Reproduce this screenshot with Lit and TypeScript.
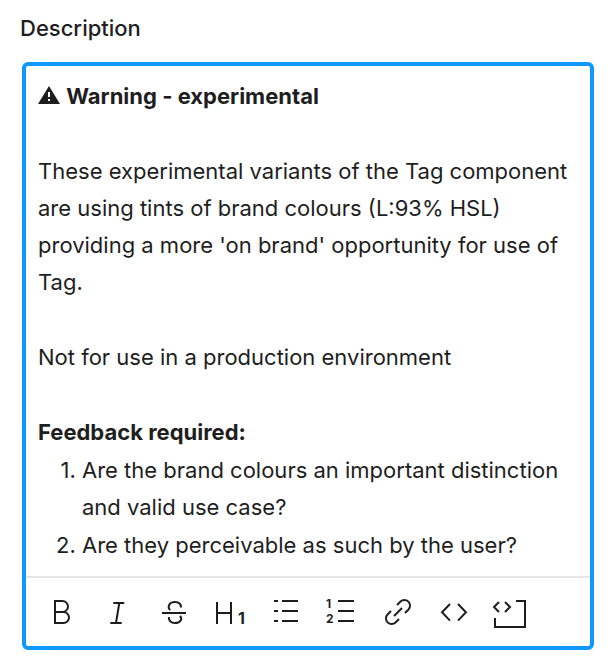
import { LitElement, html, css, svg, type SVGTemplateResult } from "lit";
import { customElement } from "lit/decorators.js";

interface Tool {
  label: string;
  icon: SVGTemplateResult;
}

const tools: Tool[] = [
  {
    label: "Bold",
    icon: svg`<path d="M11 18V7h7.5a5.5 5.5 0 0 1 0 11M18 18H11v11h8.5a5.5 5.5 0 0 0 0-11H11" />`,
  },
  {
    label: "Italic",
    icon: svg`<path d="M13.3 9h11M10.3 29h11.4M19.3 9l-3.3 20" />`,
  },
  {
    label: "Strikethrough",
    icon: svg`<path d="M6 19h24M14.3 16C11.3 13.5 12.5 8 19 8c4 0 6 2.5 6 5.500M12.8 23c0 4 2.4 6 6.2 6 6 0 7.5-4.5 5-7" />`,
  },
  {
    label: "Heading 1",
    icon: svg`<path d="M5 8v22M19 8v22M5 19h14" /><text class="digit heading" x="26" y="30">1</text>`,
  },
  {
    label: "Bulleted list",
    icon: svg`<path d="M6 7h4M14 7h16M6 17h4M14 17h16M6 27h4M14 27h16" />`,
  },
  {
    label: "Numbered list",
    icon: svg`<path d="M14 7h16M14 17h16M14 27h16" /><text class="digit" x="2" y="14">1</text><text class="digit" x="2" y="29">2</text>`,
  },
  {
    label: "Link",
    icon: svg`<path d="M17 11l3.5-3.5a5.66 5.66 0 0 1 8 8L25 19M19 25l-3.5 3.5a5.66 5.66 0 0 1-8-8L11 17M14 22l8-8" />`,
  },
  {
    label: "Code",
    icon: svg`<path d="M14 10l-8 8.3 8 8.3M22 10l8 8.3-8 8.3" />`,
  },
  {
    label: "Code block",
    icon: svg`<path d="M24 7h9v26H3v-9M7 8l-5 5 5 5M13 8l5 5-5 5" />`,
  },
];

@customElement("app-root")
export class AppRoot extends LitElement {
  static styles = css`
    :host {
      display: block;
      min-height: 100vh;
      box-sizing: border-box;
      padding: 10px 20px 14px;
      background: #fff;
      color: #1e1e1e;
      font: 400 22px/37px Inter, "Liberation Sans", sans-serif;
    }
    .label {
      display: block;
      margin-bottom: 15px;
      font-weight: 500;
    }
    .field {
      margin: 0 0 0 2px;
      border: 4px solid #0d99ff;
      border-radius: 6px;
    }
    .editor {
      padding: 12px;
      outline: none;
    }
    .text,
    .title {
      margin: 0;
    }
    .text {
      margin-bottom: 38px;
    }
    .title {
      font-weight: 700;
    }
    .warning {
      width: 22px;
      height: 18px;
      margin-right: 1px;
      fill: currentColor;
    }
    .mark {
      stroke: #fff;
      stroke-width: 2;
    }
    .list {
      margin: 0;
      padding-left: 44px;
    }
    .item {
      margin-top: 1px;
    }
    .item::marker {
      font-variant-numeric: normal;
    }
    .toolbar {
      display: flex;
      flex-wrap: wrap;
      padding: 6px 8px;
      border-top: 2px solid #e6e6e6;
    }
    .tool {
      display: grid;
      place-items: center;
      width: 56px;
      height: 56px;
      padding: 0;
      border: 0;
      background: none;
      color: inherit;
    }
    .icon {
      width: 36px;
      height: 36px;
      fill: none;
      stroke: currentColor;
      stroke-width: 2;
      overflow: visible;
    }
    .digit {
      fill: currentColor;
      stroke: none;
      font: 700 12px Inter, "Liberation Sans", sans-serif;
    }
    .heading {
      font-size: 16px;
    }
  `;

  render() {
    return html`
      <label class="label" id="description-label">Description</label>
      <div class="field">
        <div
          class="editor"
          role="textbox"
          aria-multiline="true"
          aria-labelledby="description-label"
          contenteditable="true"
          spellcheck="false"
        >
          <p class="text title"><svg class="warning" viewBox="0 0 22 18" role="img" aria-label="Warning sign"><path d="M11 0l11 18H0z" /><path class="mark" d="M11 6v5M11 13v2" /></svg> Warning - experimental</p>
          <p class="text">These experimental variants of the Tag component are using tints of brand colours (L:93% HSL) providing a more 'on brand' opportunity for use of Tag.</p>
          <p class="text">Not for use in a production environment</p>
          <p class="title">Feedback required:</p>
          <ol class="list">
            <li class="item">Are the brand colours an important distinction and valid use case?</li>
            <li class="item">Are they perceivable as such by the user?</li>
          </ol>
        </div>
        <div class="toolbar" role="toolbar" aria-label="Formatting">
          ${tools.map(
            (tool) => html`
              <button class="tool" type="button" aria-label=${tool.label}>
                <svg class="icon" viewBox="0 0 36 36" aria-hidden="true">${tool.icon}</svg>
              </button>
            `,
          )}
        </div>
      </div>
    `;
  }
}
